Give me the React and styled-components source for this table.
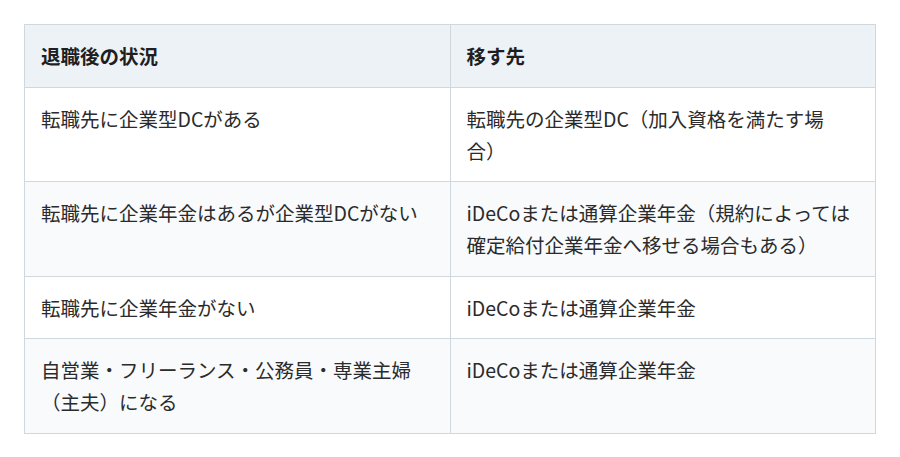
import React from "react";
import styled, { createGlobalStyle } from "styled-components";

const Global = createGlobalStyle`
  html, body { margin: 0; padding: 0; background: #ffffff; }
  body { font-family: "Noto Sans CJK JP", "Noto Sans", sans-serif; }
`;

const Page = styled.div`
  padding: 24px;
`;

const Table = styled.table`
  width: 852px;
  border-collapse: collapse;
  table-layout: fixed;
  font-size: 19.5px;
  line-height: 32px;
  color: #2b2b2b;
  border: 1px solid #cfd7df;
  text-spacing-trim: space-all;
`;

const Th = styled.th`
  background: #edf2f7;
  font-weight: 700;
  text-align: left;
  padding: 15px 16px 14.5px;
  border: 1px solid #cfd7df;
  color: #1f1f1f;
`;

const Row = styled.tr`
  background: ${(p) => (p.$alt ? "#f8fafc" : "#ffffff")};
`;

const Td = styled.td`
  padding: 15px 16px 14.5px;
  border: 1px solid #cfd7df;
  vertical-align: top;
  line-break: strict;
`;

const rows = [
  ["転職先に企業型DCがある", "転職先の企業型DC（加入資格を満たす場合）"],
  [
    "転職先に企業年金はあるが企業型DCがない",
    "iDeCoまたは通算企業年金（規約によっては確定給付企業年金へ移せる場合もある）",
  ],
  ["転職先に企業年金がない", "iDeCoまたは通算企業年金"],
  ["自営業・フリーランス・公務員・専業主婦（主夫）になる", "iDeCoまたは通算企業年金"],
];

export default function App() {
  return (
    <Page>
      <Global />
      <Table>
        <thead>
          <tr>
            <Th>退職後の状況</Th>
            <Th>移す先</Th>
          </tr>
        </thead>
        <tbody>
          {rows.map((r, i) => (
            <Row key={i} $alt={i % 2 === 1}>
              <Td>{r[0]}</Td>
              <Td>{r[1]}</Td>
            </Row>
          ))}
        </tbody>
      </Table>
    </Page>
  );
}
